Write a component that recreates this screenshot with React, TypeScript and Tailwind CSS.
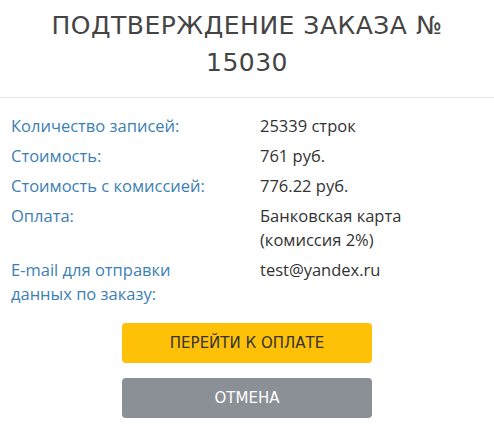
import React from 'react'

const rows: { label: string[]; value: string[] }[] = [
  { label: ['Количество записей:'], value: ['25339 строк'] },
  { label: ['Стоимость:'], value: ['761 руб.'] },
  { label: ['Стоимость с комиссией:'], value: ['776.22 руб.'] },
  { label: ['Оплата:'], value: ['Банковская карта', '(комиссия 2%)'] },
  { label: ['E-mail для отправки', 'данных по заказу:'], value: ['test@yandex.ru'] },
]

export default function App() {
  return (
    <div className="w-[494px] h-[428px] bg-white overflow-hidden">
      <div className="px-[40px] pt-[7px] pb-[16px] border-b border-[#e6e6e6]">
        <h1
          className="text-center text-[25px] leading-[37px] font-normal text-[#444] tracking-[0.5px]"
          style={{ fontFamily: '"DejaVu Sans", sans-serif' }}
        >
          ПОДТВЕРЖДЕНИЕ ЗАКАЗА № 15030
        </h1>
      </div>

      <div
        className="flex flex-col gap-[6px] pt-[16px] pl-[11px] text-[16.5px] leading-[24px]"
        style={{ fontFamily: '"Open Sans", sans-serif' }}
      >
        {rows.map((r, i) => (
          <div key={i} className="flex">
            <div className="w-[249px] text-[#3c7fb5]">
              {r.label.map((l, j) => (
                <div key={j}>{l}</div>
              ))}
            </div>
            <div className="text-[#333]">
              {r.value.map((v, j) => (
                <div key={j}>{v}</div>
              ))}
            </div>
          </div>
        ))}
      </div>

      <div
        className="flex flex-col items-center gap-[15px] mt-[17px]"
        style={{ fontFamily: '"DejaVu Sans", sans-serif' }}
      >
        <button className="w-[250px] h-[40px] rounded-[4px] bg-[#ffc107] text-[#333] text-[15px] font-normal">
          ПЕРЕЙТИ К ОПЛАТЕ
        </button>
        <button className="w-[250px] h-[40px] rounded-[4px] bg-[#8a9095] text-white text-[15px] font-normal">
          ОТМЕНА
        </button>
      </div>
    </div>
  )
}
